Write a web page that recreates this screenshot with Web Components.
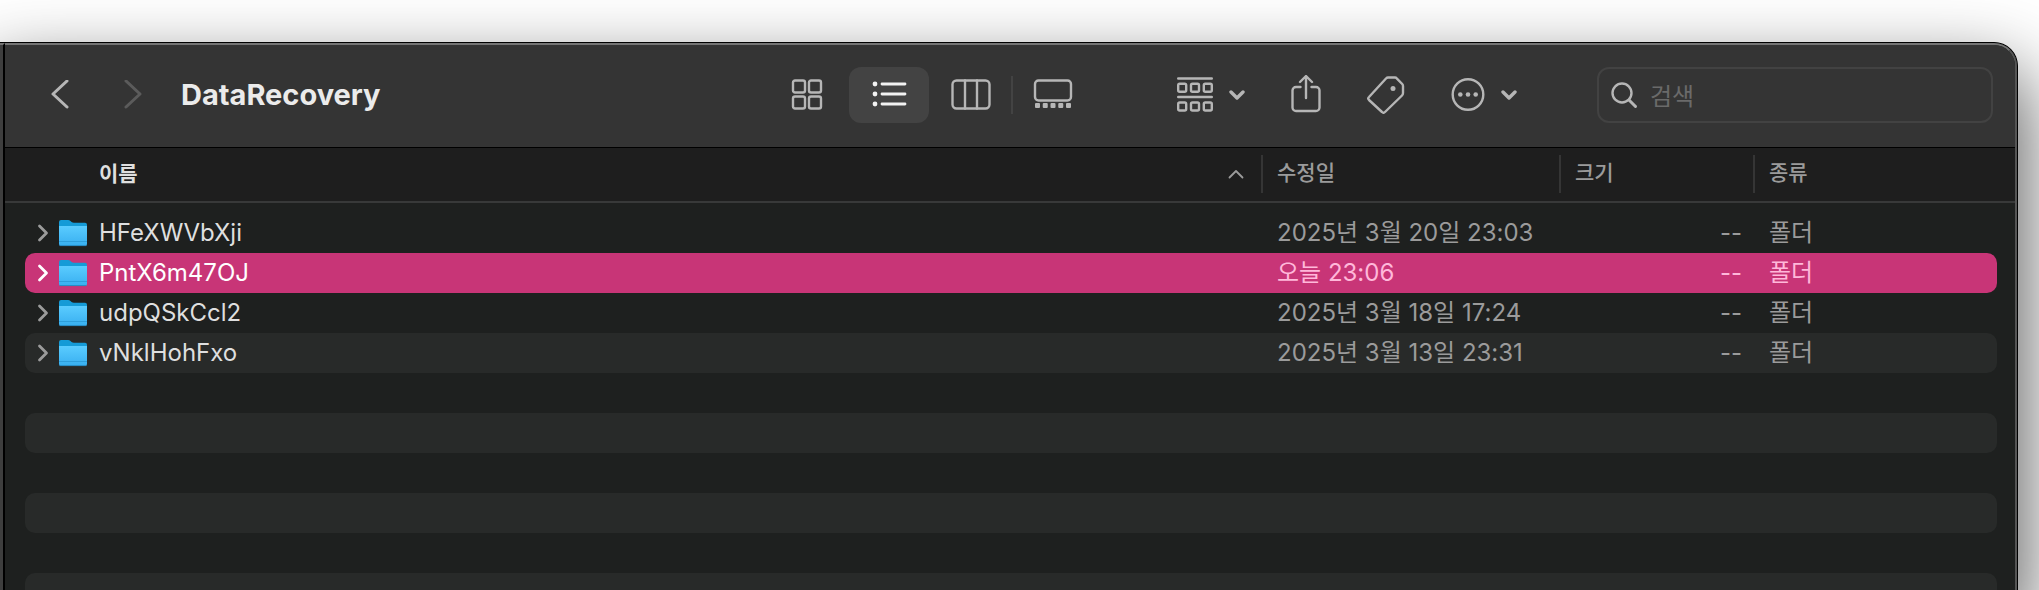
<!DOCTYPE html>
<html lang="ko">
<head>
<meta charset="utf-8">
<title>DataRecovery</title>
<style>
    html, body {
        height: 100%;
    }

    body {
        margin: 0;
        overflow: hidden;
        background: #fff;
        font-family: Inter, "Noto Sans CJK KR", sans-serif;
    }
</style>
</head>
<body>

<finder-window>
    <finder-toolbar slot="toolbar" heading="DataRecovery">
        <tool-button slot="nav" icon="back" label="뒤로"></tool-button>
        <tool-button slot="nav" icon="forward" label="앞으로" disabled></tool-button>
        <view-switcher slot="views" value="list"></view-switcher>
        <tool-button slot="actions" icon="group" label="그룹" menu></tool-button>
        <tool-button slot="actions" icon="share" label="공유"></tool-button>
        <tool-button slot="actions" icon="tag" label="태그"></tool-button>
        <tool-button slot="actions" icon="more" label="동작" menu></tool-button>
        <search-field slot="search" placeholder="검색"></search-field>
    </finder-toolbar>
    <file-list></file-list>
</finder-window>

<script>
const icons = {
    back: '<svg width="18" height="30"><path d="M16 1 2 14l14 13" stroke-width="3"/></svg>',
    forward: '<svg width="18" height="30"><path d="M2 1l14 13L2 27" stroke-width="3"/></svg>',
    icons: `<svg width="32" height="32">
        <rect x="2" y="1.5" width="12" height="12" rx="2"/>
        <rect x="18" y="1.5" width="12" height="12" rx="2"/>
        <rect x="2" y="17.5" width="12" height="12" rx="2"/>
        <rect x="18" y="17.5" width="12" height="12" rx="2"/>
    </svg>`,
    list: `<svg width="36" height="28">
        <path d="M11 3h23M11 13h23M11 23h23" stroke-width="2.8"/>
        <g class="fill"><circle cx="4" cy="3" r="2.4"/><circle cx="4" cy="13" r="2.4"/><circle cx="4" cy="23" r="2.4"/></g>
    </svg>`,
    columns: `<svg width="40" height="32">
        <rect x="1.5" y="1.5" width="37" height="28" rx="4"/>
        <path d="M14 1.5v28M26 1.5v28"/>
    </svg>`,
    gallery: `<svg width="40" height="32">
        <rect x="2" y="1.5" width="36" height="20" rx="3.5"/>
        <g class="fill">
            <rect x="2" y="24" width="5" height="5" rx="1"/><rect x="9.75" y="24" width="5" height="5" rx="1"/>
            <rect x="17.5" y="24" width="5" height="5" rx="1"/><rect x="25.25" y="24" width="5" height="5" rx="1"/>
            <rect x="33" y="24" width="5" height="5" rx="1"/>
        </g>
    </svg>`,
    group: `<svg width="36" height="36">
        <path d="M1.2 1.5h33.6M1.2 20h33.6"/>
        <rect x="1.2" y="6.7" width="8" height="8" rx="1.5"/>
        <rect x="14" y="6.7" width="8" height="8" rx="1.5"/>
        <rect x="26.8" y="6.7" width="8" height="8" rx="1.5"/>
        <rect x="1.2" y="25.5" width="8" height="8" rx="1.5"/>
        <rect x="14" y="25.5" width="8" height="8" rx="1.5"/>
        <rect x="26.8" y="25.5" width="8" height="8" rx="1.5"/>
    </svg>`,
    share: `<svg width="30" height="40">
        <path d="M9.5 12H5a3.5 3.5 0 0 0-3.5 3.5v17A3.5 3.5 0 0 0 5 36h20a3.5 3.5 0 0 0 3.5-3.5v-17A3.5 3.5 0 0 0 25 12h-4.5"/>
        <path d="M15 23V1.5M9 7l6-6 6 6"/>
    </svg>`,
    tag: `<svg width="38" height="38">
        <path d="M21 1.5h7q1 0 1.7.8l5.500 5.700q.8.8.8 2v7q0 1.5-1 2.5L18 36q-1.5 1.5-3 0L2 24q-1.5-1.500 0-3L19 2.500q1-1 2-1z"/>
        <circle class="fill" cx="26" cy="12.5" r="2.5"/>
    </svg>`,
    more: `<svg width="34" height="34">
        <circle cx="17" cy="16.5" r="15.3"/>
        <g class="fill"><circle cx="9.3" cy="16.5" r="2.3"/><circle cx="17" cy="16.5" r="2.3"/><circle cx="24.7" cy="16.5" r="2.3"/></g>
    </svg>`,
    search: '<svg width="28" height="28"><circle cx="12" cy="12" r="9.5"/><path d="M19 19l6.500 6.500" stroke-width="3"/></svg>',
    down: '<svg width="16" height="10"><path d="M2 2l6 6 6-6" stroke-width="3.4"/></svg>',
    sort: '<svg width="16" height="10"><path d="M1.5 8.5 8 2l6.500 6.500" stroke-width="1.8"/></svg>',
    disclose: '<svg width="12" height="18"><path d="M2.5 2l7 7-7 7" stroke-width="2.8"/></svg>',
    folder: `<svg width="30" height="28">
        <defs>
            <linearGradient id="front" x2="0" y2="1">
                <stop stop-color="#5accff"/><stop offset="1" stop-color="#38aff0"/>
            </linearGradient>
        </defs>
        <path d="M1 3a2 2 0 0 1 2-2h7q1.5 0 2.5 1l1 1q1 .8 2.5.8h11a2 2 0 0 1 2 2V14H1z" fill="#159bd7" stroke="none"/>
        <path d="M1 7h28v18a2 2 0 0 1-2 2H3a2 2 0 0 1-2-2z" fill="url(#front)" stroke="none"/>
        <path d="M1 22.5h28" stroke="#2d9edb" stroke-width="1" stroke-linecap="butt"/>
        <path d="M2 26.6h26" stroke="#2789c0" stroke-width="1"/>
    </svg>`
};

const iconStyles = `
    svg {
        display: block;
        flex: none;
        fill: none;
        stroke: currentColor;
        stroke-width: 2.4;
        stroke-linecap: round;
        stroke-linejoin: round;
    }
    .fill {
        fill: currentColor;
        stroke: none;
    }
    button {
        display: flex;
        align-items: center;
        justify-content: center;
        margin: 0;
        padding: 0;
        border: 0;
        background: none;
        color: inherit;
        font: inherit;
    }
`;

class FinderWindow extends HTMLElement {
    constructor() {
        super();
        this.attachShadow({ mode: 'open' }).innerHTML = `
            <style>
                :host {
                    display: flex;
                    box-sizing: border-box;
                    height: 100vh;
                    padding: 42px 21px 0 0;
                }
                .frame {
                    display: flex;
                    flex: 1;
                    min-width: 0;
                    border: 1px solid #000;
                    border-width: 1px 1px 0 0;
                    border-radius: 0 24px 0 0;
                    background: #1e201f;
                    box-shadow: 0 36px 72px 10px rgba(0, 0, 0, 0.6);
                }
                .sidebar {
                    width: 3px;
                    border-right: 2px solid #000;
                    border-top: 2px solid #747474;
                    background: #3e3e3e;
                }
                main {
                    display: flex;
                    flex-direction: column;
                    flex: 1;
                    min-width: 0;
                    overflow: hidden;
                    border-top: 2px solid #747474;
                    border-right: 2px solid #555;
                    border-radius: 0 23px 0 0;
                }
            </style>
            <div class="frame">
                <div class="sidebar"></div>
                <main>
                    <slot name="toolbar"></slot>
                    <slot></slot>
                </main>
            </div>
        `;
    }
}

class FinderToolbar extends HTMLElement {
    constructor() {
        super();
        this.attachShadow({ mode: 'open' }).innerHTML = `
            <style>
                :host {
                    display: flex;
                    align-items: center;
                    flex: none;
                    box-sizing: border-box;
                    height: 103px;
                    padding: 0 22px 2px 46px;
                    border-bottom: 1px solid #000;
                    background: #343434;
                    color: #b6b6b6;
                }
                nav {
                    display: flex;
                    gap: 55px;
                }
                h1 {
                    flex: 1;
                    margin: 0 0 0 39px;
                    color: #ebebeb;
                    font-size: 29px;
                    font-weight: 700;
                    line-height: 40px;
                }
                .actions {
                    display: flex;
                    align-items: center;
                    gap: 46px;
                    margin: 0 80px 0 83px;
                }
            </style>
            <nav><slot name="nav"></slot></nav>
            <h1></h1>
            <slot name="views"></slot>
            <div class="actions"><slot name="actions"></slot></div>
            <slot name="search"></slot>
        `;
    }

    connectedCallback() {
        this.shadowRoot.querySelector('h1').textContent = this.getAttribute('heading');
    }
}

class ToolButton extends HTMLElement {
    constructor() {
        super();
        this.attachShadow({ mode: 'open' });
    }

    connectedCallback() {
        this.shadowRoot.innerHTML = `
            <style>
                ${iconStyles}
                :host {
                    display: block;
                }
                button {
                    gap: 16px;
                }
                button:disabled {
                    color: #5b5b5b;
                }
            </style>
            <button type="button" aria-label="${this.getAttribute('label')}">
                ${icons[this.getAttribute('icon')]}
                ${this.hasAttribute('menu') ? icons.down : ''}
            </button>
        `;
        this.shadowRoot.querySelector('button').disabled = this.hasAttribute('disabled');
    }
}

class ViewSwitcher extends HTMLElement {
    constructor() {
        super();
        this.attachShadow({ mode: 'open' }).innerHTML = `
            <style>
                ${iconStyles}
                :host {
                    display: flex;
                    align-items: center;
                }
                button {
                    width: 80px;
                    height: 56px;
                    margin: 0 1px;
                    border-radius: 12px;
                }
                button[aria-pressed="true"] {
                    background: #434343;
                    color: #f2f2f2;
                }
                .divider {
                    width: 2px;
                    height: 38px;
                    margin: 0 -1px;
                    background: #434343;
                }
            </style>
            <button type="button" data-view="icons" aria-label="아이콘">${icons.icons}</button>
            <button type="button" data-view="list" aria-label="목록">${icons.list}</button>
            <button type="button" data-view="columns" aria-label="계층">${icons.columns}</button>
            <span class="divider"></span>
            <button type="button" data-view="gallery" aria-label="갤러리">${icons.gallery}</button>
        `;
        this.buttons = this.shadowRoot.querySelectorAll('button');
    }

    connectedCallback() {
        this.buttons.forEach((button) => {
            button.addEventListener('click', () => this.#select(button.dataset.view));
        });
        this.#select(this.getAttribute('value'));
    }

    #select(view) {
        this.buttons.forEach((button) => {
            button.setAttribute('aria-pressed', button.dataset.view === view);
        });
    }
}

class SearchField extends HTMLElement {
    constructor() {
        super();
        this.attachShadow({ mode: 'open' });
    }

    connectedCallback() {
        const placeholder = this.getAttribute('placeholder');

        this.shadowRoot.innerHTML = `
            <style>
                ${iconStyles}
                :host {
                    display: block;
                    width: 396px;
                }
                label {
                    display: flex;
                    align-items: center;
                    gap: 12px;
                    box-sizing: border-box;
                    height: 56px;
                    padding: 0 11px;
                    border: 2px solid #424242;
                    border-radius: 12px;
                }
                input {
                    flex: 1;
                    min-width: 0;
                    padding: 2px 0 0;
                    border: 0;
                    outline: 0;
                    background: none;
                    color: #ebebeb;
                    font: inherit;
                    font-size: 24px;
                }
                input::placeholder {
                    color: #6a6a6a;
                }
            </style>
            <label>
                ${icons.search}
                <input type="text" placeholder="${placeholder}" aria-label="${placeholder}">
            </label>
        `;
    }
}

class FileList extends HTMLElement {
    constructor() {
        super();
        this.attachShadow({ mode: 'open' }).innerHTML = `
            <style>
                ${iconStyles}
                :host {
                    display: block;
                    flex: 1;
                    min-height: 0;
                    overflow: hidden;
                    background: #1e201f;
                    color: #9b9b9b;
                    font-size: 24px;
                }
                table, thead, tbody {
                    display: block;
                }
                thead {
                    padding: 7px 18px 8px 20px;
                    border-bottom: 2px solid #383939;
                    background: #1e1e1e;
                    font-size: 21px;
                }
                tbody, .filler {
                    padding: 0 18px 0 20px;
                }
                tbody {
                    padding-top: 10px;
                }
                tr {
                    display: grid;
                    grid-template-columns: 1fr 298px 194px 244px;
                }
                th, td {
                    box-sizing: border-box;
                    height: 40px;
                    padding: 0 0 0 16px;
                    line-height: 40px;
                    text-align: left;
                    white-space: nowrap;
                }
                th {
                    height: 38px;
                    padding-left: 14px;
                    border-left: 2px solid #353535;
                    font-weight: 500;
                    line-height: 36px;
                }
                th:first-child {
                    display: flex;
                    align-items: center;
                    justify-content: space-between;
                    padding: 0 17px 0 74px;
                    border: 0;
                    font-weight: 600;
                }
                th:first-child span {
                    color: #dfdfdf;
                }
                td:first-child {
                    display: flex;
                    align-items: center;
                    padding-left: 12px;
                    color: #dfdfdf;
                }
                td:first-child button {
                    margin-right: 9px;
                    color: #9b9b9b;
                }
                td:first-child svg + span {
                    margin-left: 11px;
                }
                td:nth-child(3) {
                    padding-right: 11px;
                    text-align: right;
                }
                tbody tr, .row {
                    border-radius: 10px;
                }
                .row {
                    height: 40px;
                }
                tbody tr:nth-child(even), .row:nth-child(even) {
                    background: #282a29;
                }
                tbody tr.selected {
                    background: #c83577;
                    color: #ffb8da;
                }
                .selected td:first-child, .selected td:first-child button {
                    color: #fff;
                }
            </style>
            <table>
                <thead>
                    <tr>
                        <th scope="col" aria-sort="ascending"><span>이름</span>${icons.sort}</th>
                        <th scope="col">수정일</th>
                        <th scope="col">크기</th>
                        <th scope="col">종류</th>
                    </tr>
                </thead>
                <tbody></tbody>
            </table>
            <div class="filler">${'<div class="row"></div>'.repeat(40)}</div>
        `;
        this.body = this.shadowRoot.querySelector('tbody');
    }

    get files() {
        return this._files;
    }
    set files(value) {
        this._files = value;
        this.#render();
    }

    #render() {
        this.body.innerHTML = this.files.map((file) => `
            <tr class="${file.selected ? 'selected' : ''}">
                <td><button type="button" aria-label="${file.name} 펼치기">${icons.disclose}</button>${icons.folder}<span>${file.name}</span></td>
                <td>${file.modified}</td>
                <td>--</td>
                <td>폴더</td>
            </tr>
        `).join('');
    }
}

customElements.define('finder-window', FinderWindow);
customElements.define('finder-toolbar', FinderToolbar);
customElements.define('tool-button', ToolButton);
customElements.define('view-switcher', ViewSwitcher);
customElements.define('search-field', SearchField);
customElements.define('file-list', FileList);

document.querySelector('file-list').files = [
    { name: 'HFeXWVbXji', modified: '2025년 3월 20일 23:03' },
    { name: 'PntX6m47OJ', modified: '오늘 23:06', selected: true },
    { name: 'udpQSkCcl2', modified: '2025년 3월 18일 17:24' },
    { name: 'vNklHohFxo', modified: '2025년 3월 13일 23:31' }
];
</script>
</body>
</html>
